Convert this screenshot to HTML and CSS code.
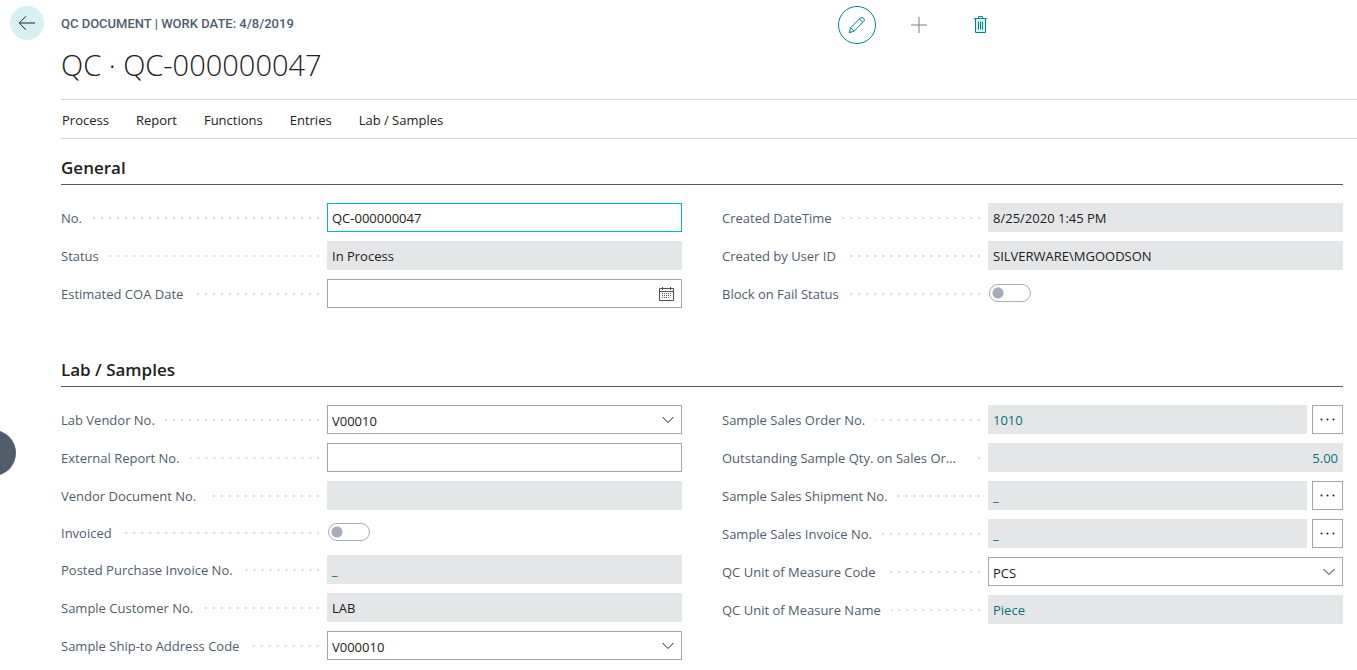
FILE: index.html
```html
<!DOCTYPE html>
<html lang="en">
<head>
<meta charset="utf-8">
<title>QC · QC-000000047</title>
<link rel="stylesheet" href="styles.css">
</head>
<body>
<div class="page">
  <button class="side-handle" aria-label="Previous record"></button>
  <header class="header">
    <button class="back" aria-label="Back">
      <svg width="18" height="16" viewBox="0 0 18 16"><path d="M17 8H1.5M8 1.2L1.2 8L8 14.8"/></svg>
    </button>
    <p class="caption">QC DOCUMENT | WORK DATE: 4/8/2019</p>
    <div class="actions">
      <button class="action edit" aria-label="Edit">
        <svg width="18" height="18" viewBox="0 0 18 18"><path d="M1.2 16.8L2.6 11.8L12.6 1.8Q13.9 .8 15.4 2.2Q17 3.8 16 5.2L6 15.2L1.2 16.8M2.6 11.8L6 15.2M11.4 3L14.8 6.4M1.2 16.8L2.4 15.6"/></svg>
      </button>
      <button class="action add" aria-label="New">
        <svg width="16" height="16" viewBox="0 0 16 16"><path d="M8 0V16M0 8H16"/></svg>
      </button>
      <button class="action" aria-label="Delete">
        <svg width="14" height="18" viewBox="0 0 14 18"><path class="bin" d="M1.5 3V16.5H11.5V3"/><path d="M0 2.5H13M4.5 2.5V.5H8.5V2.5M4.5 5.5V13.5M6.5 5.5V13.5M8.5 5.5V13.5"/></svg>
      </button>
    </div>
  </header>
  <main class="content">
    <h1 class="title">QC · QC-000000047</h1>
    <nav class="menu">
      <button>Process</button><button>Report</button><button>Functions</button><button>Entries</button><button>Lab / Samples</button>
    </nav>

    <section class="group">
      <h2>General</h2>
      <div class="columns">
        <div class="column">
          <div class="row"><label for="no"><span>No.</span></label><input class="box focus" id="no" value="QC-000000047"></div>
          <div class="row"><label for="status"><span>Status</span></label><input class="box gray" id="status" value="In Process" readonly></div>
          <div class="row"><label for="coa"><span>Estimated COA Date</span></label>
            <div class="wrap"><input class="box" id="coa">
              <svg class="mark calendar" width="15" height="14" viewBox="0 0 15 14"><path d="M.5 1.5H14.5V13.5H.5ZM.5 4.5H14.5M3.5 0V3M11.5 0V3"/><path class="days" d="M3 6.5H13M3 8.5H13M3 10.5H11"/></svg></div></div>
        </div>
        <div class="column">
          <div class="row"><label for="created"><span>Created DateTime</span></label><input class="box gray" id="created" value="8/25/2020 1:45 PM" readonly></div>
          <div class="row"><label for="user"><span>Created by User ID</span></label><input class="box gray" id="user" value="SILVERWARE\MGOODSON" readonly></div>
          <div class="row"><label for="block"><span>Block on Fail Status</span></label><input class="toggle" id="block" type="checkbox"></div>
        </div>
      </div>
    </section>

    <section class="group">
      <h2>Lab / Samples</h2>
      <div class="columns">
        <div class="column">
          <div class="row"><label for="vendor"><span>Lab Vendor No.</span></label>
            <div class="wrap"><select class="box" id="vendor"><option>V00010</option></select><svg class="mark" width="12" height="7" viewBox="0 0 12 7"><path d="M.5 .5L6 6L11.5 .5"/></svg></div></div>
          <div class="row"><label for="external"><span>External Report No.</span></label><input class="box" id="external"></div>
          <div class="row"><label for="document"><span>Vendor Document No.</span></label><input class="box gray" id="document" readonly></div>
          <div class="row short"><label for="invoiced"><span>Invoiced</span></label><input class="toggle" id="invoiced" type="checkbox"></div>
          <div class="row"><label for="posted"><span>Posted Purchase Invoice No.</span></label><a class="box gray" id="posted" href="#">_</a></div>
          <div class="row"><label for="customer"><span>Sample Customer No.</span></label><input class="box gray" id="customer" value="LAB" readonly></div>
          <div class="row"><label for="shipto"><span>Sample Ship-to Address Code</span></label>
            <div class="wrap"><select class="box" id="shipto"><option>V000010</option></select><svg class="mark" width="12" height="7" viewBox="0 0 12 7"><path d="M.5 .5L6 6L11.5 .5"/></svg></div></div>
        </div>
        <div class="column">
          <div class="row"><label for="order"><span>Sample Sales Order No.</span></label><a class="box gray" id="order" href="#">1010</a>
            <button class="more" aria-label="Look up order"><svg width="15" height="3" viewBox="0 0 15 3"><circle cx="1.5" cy="1.5" r="1"/><circle cx="7.5" cy="1.5" r="1"/><circle cx="13.5" cy="1.5" r="1"/></svg></button></div>
          <div class="row"><label for="qty"><span>Outstanding Sample Qty. on Sales Order</span></label><a class="box gray number" id="qty" href="#">5.00</a></div>
          <div class="row"><label for="shipment"><span>Sample Sales Shipment No.</span></label><a class="box gray" id="shipment" href="#">_</a>
            <button class="more" aria-label="Look up shipment"><svg width="15" height="3" viewBox="0 0 15 3"><circle cx="1.5" cy="1.5" r="1"/><circle cx="7.5" cy="1.5" r="1"/><circle cx="13.5" cy="1.5" r="1"/></svg></button></div>
          <div class="row"><label for="invoice"><span>Sample Sales Invoice No.</span></label><a class="box gray" id="invoice" href="#">_</a>
            <button class="more" aria-label="Look up invoice"><svg width="15" height="3" viewBox="0 0 15 3"><circle cx="1.5" cy="1.5" r="1"/><circle cx="7.5" cy="1.5" r="1"/><circle cx="13.5" cy="1.5" r="1"/></svg></button></div>
          <div class="row"><label for="uom"><span>QC Unit of Measure Code</span></label>
            <div class="wrap"><select class="box" id="uom"><option>PCS</option></select><svg class="mark" width="12" height="7" viewBox="0 0 12 7"><path d="M.5 .5L6 6L11.5 .5"/></svg></div></div>
          <div class="row"><label for="uomname"><span>QC Unit of Measure Name</span></label><a class="box gray" id="uomname" href="#">Piece</a></div>
        </div>
      </div>
    </section>
  </main>
</div>
</body>
</html>
```
FILE: styles.css
```css
* { box-sizing: border-box; }
body {
  margin: 0;
  background: #fff;
  color: #212121;
  font: 13px/20px "Segoe UI", "Open Sans", "Noto Sans", sans-serif;
}
.page { position: relative; min-height: 100vh; }
button { font: inherit; color: inherit; background: none; border: 0; padding: 0; }
svg { display: block; fill: none; stroke: currentColor; }

.side-handle {
  position: absolute;
  left: -30px;
  top: 430px;
  width: 46px;
  height: 46px;
  border-radius: 50%;
  background: #505c6d;
}
.header { display: grid; grid-template-columns: 61px 777px 1fr; height: 47px; }
.back {
  width: 34px;
  height: 34px;
  margin: 6px 0 0 10px;
  border-radius: 50%;
  background: #d9f0f2;
  display: grid;
  place-items: center;
}
.caption {
  margin: 14px 0 0;
  font: 500 13px/20px Roboto, sans-serif;
  color: #505c6d;
}
.actions { display: flex; gap: 24px; padding-top: 6px; color: #008489; }
.action { width: 38px; height: 38px; display: grid; place-items: center; }
.edit { border: 1px solid #008489; border-radius: 50%; }
.add { color: #757d89; }
.bin { fill: #d9f0f2; }

.content { padding-left: 61px; }
.title {
  margin: 0;
  height: 52px;
  font-size: 29px;
  font-weight: 300;
  line-height: 36px;
}
.menu {
  display: flex;
  gap: 27px;
  height: 40px;
  padding: 2px 0 0 1px;
  border: solid #d2d4d6;
  border-width: 1px 0;
}
.group { padding-right: 14px; }
.group h2 {
  margin: 0 0 18px;
  padding: 17px 0 4px;
  font-size: 17px;
  font-weight: 600;
  line-height: 24px;
  border-bottom: 1px solid #505c6d;
}
.group + .group { padding-top: 33px; }
.columns { display: grid; grid-template-columns: 1fr 1fr; gap: 40px; }
.column { display: flex; flex-direction: column; gap: 9px; }
.row { display: flex; align-items: center; height: 29px; }
.short { height: 27px; }
.row label {
  flex: none;
  width: 266px;
  padding-right: 8px;
  display: flex;
  align-items: center;
  color: #505c6d;
}
.row label span {
  max-width: 250px;
  padding-right: 10px;
  overflow: hidden;
  white-space: nowrap;
  text-overflow: ellipsis;
}
.row label::after {
  content: "";
  flex: 1;
  height: 2px;
  background: linear-gradient(90deg, transparent 6px, #d9d9d9 6px) right / 8px 2px repeat-x;
}
.wrap { position: relative; flex: 1; display: flex; }
.mark { position: absolute; right: 8px; top: 50%; transform: translateY(-50%); pointer-events: none; }
.calendar { color: #505050; }
.days { stroke-dasharray: 1 1; }
.box {
  flex: 1;
  min-width: 0;
  width: 100%;
  height: 29px;
  padding: 0 4px;
  border: 1px solid #a6a6a6;
  border-radius: 0;
  background: #fff;
  color: #212121;
  font: inherit;
  line-height: 27px;
  appearance: none;
  outline: 0;
}
.focus { border-color: #00b7c3; }
.gray { background: #e5e6e8; border-color: #e5e6e8; }
select.box { padding-top: 2px; }
a.box { color: #00747a; text-decoration: none; line-height: 29px; }
.number { text-align: right; }
.more {
  width: 31px;
  height: 29px;
  margin-left: 5px;
  border: 1px solid #a6a6a6;
  display: grid;
  place-items: center;
}
.more svg { fill: #212121; stroke: none; }
.toggle {
  appearance: none;
  width: 42px;
  height: 18px;
  margin: 0 1px 2px;
  border: 1px solid #a6adb8;
  border-radius: 9px;
  background: radial-gradient(circle at 8px 8px, #a6adb8 5px, transparent 6px);
}
```
